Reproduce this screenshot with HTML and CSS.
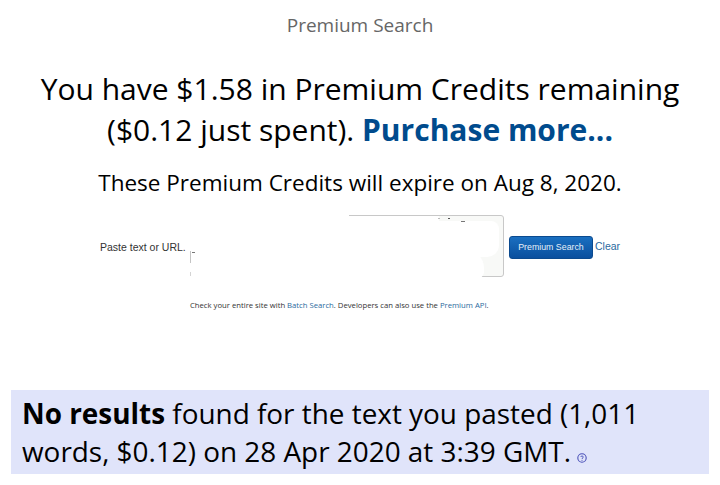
FILE: index.html
```html
<!DOCTYPE html>
<html lang="en">
<head>
    <meta charset="UTF-8">
    <title>Premium Search</title>
    <link rel="stylesheet" href="styles.css">
</head>
<body>
    <div class="page_title">Premium Search</div>

    <div class="credits">You have $1.58 in Premium Credits remaining<br>($0.12 just spent). <a href="javascript:;">Purchase more...</a></div>
    <div class="expire">These Premium Credits will expire on Aug 8, 2020.</div>

    <!-- search form -->
    <div class="search_form">
        <span class="paste_label">Paste text or URL.</span>
        <div class="text_box">
            <div class="patch patch_left"></div>
            <div class="patch patch_strip"></div>
            <div class="patch patch_main"></div>
            <div class="patch patch_low"></div>
            <span class="caret"></span>
            <span class="caret_low"></span>
            <span class="speck speck_a"></span>
            <span class="speck speck_b"></span>
            <span class="speck speck_c"></span>
            <span class="speck speck_d"></span>
        </div>
        <a class="search_btn" href="javascript:;">Premium Search</a>
        <a class="clear_link" href="javascript:;">Clear</a>
    </div>
    <div class="form_note">Check your entire site with <a href="javascript:;">Batch Search</a>. Developers can also use the <a href="javascript:;">Premium API</a>.</div>

    <!-- result -->
    <div class="result">
        <b>No results</b> found for the text you pasted (1,011 words, $0.12) on 28 Apr 2020 at 3:39 GMT.
        <svg class="help" width="10" height="10" viewBox="0 0 10 10">
            <circle cx="5" cy="5" r="4.2" fill="none" stroke="#4a50b8" stroke-width="1.1"/>
            <path d="M3.7 4C3.8 2.6 6.3 2.7 6.3 4C6.3 5 5 4.9 5 6" fill="none" stroke="#4a50b8" stroke-width="0.9"/>
            <circle cx="5" cy="7.2" r="0.55" fill="#4a50b8"/>
        </svg>
    </div>
</body>
</html>
```

FILE: styles.css
```css
*{
    margin: 0;
    padding: 0;
    box-sizing: border-box;
}
body{
    width: 720px;
    height: 485px;
    overflow: hidden;
    background-color: #fff;
    font-family: "Open Sans", "Liberation Sans", sans-serif;
    color: #000;
    text-align: center;
}
a{
    text-decoration: none;
}
.page_title{
    padding-top: 11px;
    height: 68px;
    font-size: 19px;
    line-height: 28px;
    color: #666;
}
.credits{
    font-size: 30px;
    line-height: 41px;
}
.credits a{
    color: #004b8d;
    font-weight: 700;
}
.expire{
    margin-top: 18px;
    font-size: 22.5px;
    line-height: 30px;
}
.search_form{
    display: flex;
    align-items: flex-start;
    margin-top: 17px;
    padding-left: 100px;
    text-align: left;
}
.paste_label{
    width: 90px;
    margin-top: 26px;
    font-family: "Liberation Sans", sans-serif;
    font-size: 10.5px;
    line-height: 13px;
    color: #333;
    white-space: nowrap;
}
.text_box{
    position: relative;
    width: 314px;
    height: 62px;
    background-color: #f8f9f7;
    border: 1px solid #c8c8c8;
    border-radius: 3px;
}
.patch{
    position: absolute;
    background-color: #fff;
}
.patch_left{
    left: -2px;
    top: -2px;
    width: 160px;
    height: 66px;
}
.patch_strip{
    left: 158px;
    top: 0;
    width: 90px;
    height: 6px;
}
.patch_main{
    left: 158px;
    top: 5px;
    width: 150px;
    height: 36px;
    border-radius: 0 8px 12px 0;
}
.patch_low{
    left: 158px;
    top: 34px;
    width: 135px;
    height: 28px;
    border-radius: 0 18px 6px 0;
}
.caret{
    position: absolute;
    left: -1px;
    top: 35px;
    width: 1px;
    height: 12px;
    background-color: #c4c4c4;
}
.caret_low{
    position: absolute;
    left: -1px;
    top: 56px;
    width: 1px;
    height: 4px;
    background-color: #d4d4d4;
}
.speck{
    position: absolute;
    height: 1px;
    background-color: #777;
}
.speck_a{
    left: 1px;
    top: 36px;
    width: 3px;
}
.speck_b{
    left: 247px;
    top: 2px;
    width: 2px;
    background-color: #bbb;
}
.speck_c{
    left: 257px;
    top: 2px;
    width: 2px;
    background-color: #555;
}
.speck_d{
    left: 270px;
    top: 5px;
    width: 4px;
}
.search_btn{
    width: 84px;
    height: 23px;
    margin: 21px 0 0 5px;
    background: linear-gradient(#1a6fc0, #0a4f9e);
    border: 1px solid #0b4a8f;
    border-radius: 3px;
    color: #e8f0f8;
    font-family: "Liberation Sans", sans-serif;
    font-size: 8.8px;
    line-height: 21px;
    text-align: center;
}
.clear_link{
    margin: 25px 0 0 2px;
    font-family: "Liberation Sans", sans-serif;
    font-size: 10.5px;
    line-height: 13px;
    color: #2a6a9e;
}
.form_note{
    margin-top: 23px;
    padding-left: 190px;
    text-align: left;
    font-size: 7.7px;
    line-height: 11px;
    color: #333;
}
.form_note a{
    color: #2a6a9e;
}
.result{
    width: 698px;
    height: 84px;
    margin: 79px 0 0 11px;
    padding: 4px 11px 0;
    background-color: #e0e4fa;
    font-size: 27.9px;
    line-height: 38px;
    text-align: left;
}
.help{
    margin-left: -1px;
    vertical-align: -1px;
}
```
